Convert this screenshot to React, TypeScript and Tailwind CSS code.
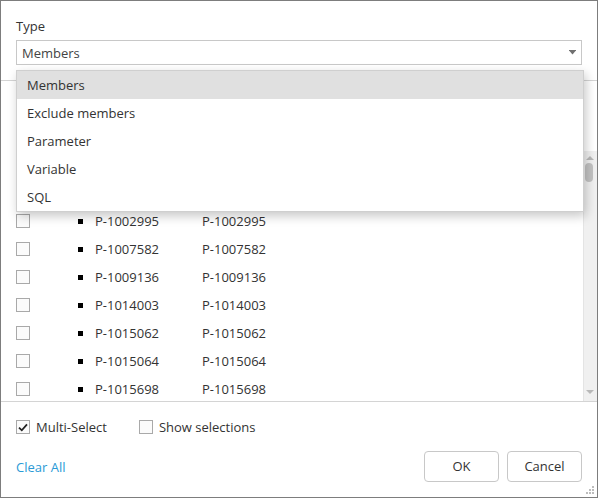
import React from "react";

const rows = [
  "P-0995411",
  "P-1001204",
  "P-1002995",
  "P-1007582",
  "P-1009136",
  "P-1014003",
  "P-1015062",
  "P-1015064",
  "P-1015698",
];

const options = ["Members", "Exclude members", "Parameter", "Variable", "SQL"];

function Box({ checked = false }: { checked?: boolean }) {
  return (
    <div className="w-[14px] h-[14px] border border-[#a9a9a9] bg-[#fbfbfb] flex items-center justify-center shrink-0">
      {checked && (
        <svg width="10" height="9" viewBox="0 0 10 9">
          <path d="M1 4.6 L3.8 7.3 L9 1.4" fill="none" stroke="#222" strokeWidth="1.8" />
        </svg>
      )}
    </div>
  );
}

export default function App() {
  return (
    <div
      className="relative w-[598px] h-[498px] border border-[#7d7d7d] bg-white flex flex-col text-[13px] text-[#333] overflow-hidden"
      style={{ fontFamily: '"Open Sans", "Noto Sans", sans-serif' }}
    >
      {/* Top section */}
      <div className="h-[80px] border-b border-[#d4d4d4] px-[15px] pt-[16px] shrink-0">
        <div className="leading-[18px] text-[#333]">Type</div>
        <div className="mt-[5px] h-[25px] border border-[#c8c8c8] flex items-center justify-between pl-[5px] pr-[5px]">
          <span className="text-[#444] leading-[18px]">Members</span>
          <svg width="7" height="5" viewBox="0 0 7 5">
            <rect x="0" y="0" width="7" height="1" fill="#707070" />
            <path d="M0.5 1 L6.5 1 L3.5 4.5 Z" fill="#707070" />
          </svg>
        </div>
      </div>

      {/* Middle list */}
      <div className="h-[321px] border-b border-[#d4d4d4] flex flex-col shrink-0">
        <div className="h-[70px] shrink-0 px-[15px] pt-[12px]">
          <div className="h-[25px] border border-[#c8c8c8]" />
        </div>
        <div className="flex-1 flex min-h-0">
          <div className="flex-1 flex flex-col overflow-hidden">
            {rows.map((r) => (
              <div key={r} className="h-[28px] shrink-0 flex items-center pl-[15px]">
                <Box />
                <div className="ml-[48px] w-[5px] h-[5px] bg-black shrink-0" />
                <span className="ml-[12px] w-[107px] leading-[18px]">{r}</span>
                <span className="leading-[18px]">{r}</span>
              </div>
            ))}
          </div>
          <div className="w-[14px] bg-[#f0f0f0] border-l border-[#e4e4e4] relative shrink-0">
            <svg className="absolute left-[1px] top-[4px]" width="10" height="6" viewBox="0 0 10 6">
              <path d="M1 5 L9 5 L5 1 Z" fill="#b8b8b8" />
            </svg>
            <div className="absolute left-[1px] top-[12px] w-[8px] h-[19px] rounded-[4px] bg-[#c2c2c2]" />
            <svg className="absolute left-[1px] bottom-[6px]" width="10" height="6" viewBox="0 0 10 6">
              <path d="M1 1 L9 1 L5 5 Z" fill="#b8b8b8" />
            </svg>
          </div>
        </div>
      </div>

      {/* Bottom section */}
      <div className="flex-1 px-[15px] pt-[16px] relative">
        <div className="h-[18px] flex items-center">
          <Box checked />
          <span className="ml-[6px] leading-[18px]">Multi-Select</span>
          <div className="ml-[32px] flex items-center">
            <Box />
            <span className="ml-[6px] leading-[18px]">Show selections</span>
          </div>
        </div>
        <div className="mt-[15px] flex items-center justify-between">
          <span className="text-[#2a9ad6] leading-[18px]">Clear All</span>
          <div className="flex gap-[8px]">
            <button className="w-[75px] h-[31px] border border-[#c8c8c8] rounded-[4px] bg-white text-[#333] text-[13px]">
              OK
            </button>
            <button className="w-[75px] h-[31px] border border-[#c8c8c8] rounded-[4px] bg-white text-[#333] text-[13px]">
              Cancel
            </button>
          </div>
        </div>
        <svg className="absolute right-[2px] bottom-[2px]" width="9" height="9" viewBox="0 0 9 9">
          <rect x="6" y="0" width="2" height="2" fill="#bdbdbd" />
          <rect x="3" y="3" width="2" height="2" fill="#bdbdbd" />
          <rect x="6" y="3" width="2" height="2" fill="#bdbdbd" />
          <rect x="0" y="6" width="2" height="2" fill="#bdbdbd" />
          <rect x="3" y="6" width="2" height="2" fill="#bdbdbd" />
          <rect x="6" y="6" width="2" height="2" fill="#bdbdbd" />
        </svg>
      </div>

      {/* Dropdown popup */}
      <div className="absolute left-[15px] top-[69px] w-[568px] border border-[#cfcfcf] bg-white shadow-[2px_4px_10px_rgba(0,0,0,0.22)]">
        {options.map((o, i) => (
          <div
            key={o}
            className={`h-[28px] flex items-center pl-[10px] leading-[18px] text-[#333] ${i === 0 ? "bg-[#e0e0e0]" : ""}`}
          >
            {o}
          </div>
        ))}
      </div>
    </div>
  );
}
